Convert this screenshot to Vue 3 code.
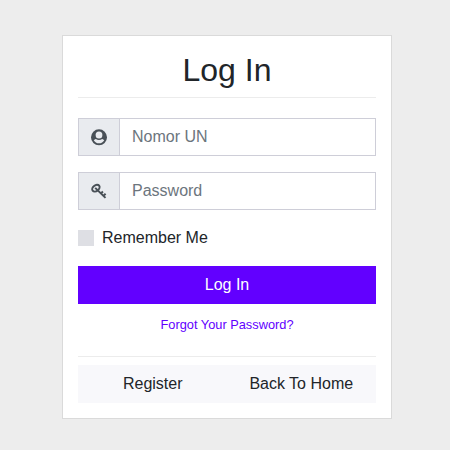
<script setup>
import { ref } from 'vue'

const username = ref('')
const password = ref('')
const remember = ref(false)
</script>

<template>
  <main class="page">
    <section class="card">
      <h2 class="title">Log In</h2>
      <form class="form" @submit.prevent>
        <div class="group">
          <span class="addon">
            <svg class="icon" viewBox="0 0 16 16">
              <circle cx="8" cy="8.3" r="8" />
              <ellipse class="cutout" cx="8" cy="6.1" rx="3.4" ry="3.5" />
              <path class="cutout" d="M2.8 11.2C3.3 10.6 4.1 10.2 4.9 10C5.7 10.7 6.8 11 8 11s2.3-.3 3.1-1c.8.2 1.6.6 2.1 1.2C12.1 13.2 10.4 14.3 8 14.3S3.9 13.2 2.8 11.2z" />
            </svg>
          </span>
          <input v-model="username" class="control" type="text" placeholder="Nomor UN" />
        </div>
        <div class="group">
          <span class="addon">
            <svg class="icon" viewBox="0 0 16 16">
              <ellipse class="stroke" cx="4.9" cy="5.2" rx="4.1" ry="2.9" transform="rotate(-38 4.9 5.2)" />
              <path class="stroke" d="M4.2 4.9L14.5 14.9M10 10.4L11.9 8.6M12.5 12.8L14.6 10.8" />
            </svg>
          </span>
          <input v-model="password" class="control" type="password" placeholder="Password" />
        </div>
        <label class="remember">
          <input v-model="remember" class="check" type="checkbox" />
          <span>Remember Me</span>
        </label>
        <button class="submit" type="submit">Log In</button>
      </form>
      <a class="forgot" href="#">Forgot Your Password?</a>
      <nav class="links">
        <a href="#">Register</a>
        <a href="#">Back To Home</a>
      </nav>
    </section>
  </main>
</template>

<style>
body {
  background: #ededed;
}
</style>

<style scoped>
* {
  box-sizing: border-box;
}
.page {
  padding: 35px 58px 31px 62px;
  font: 16px/24px "Liberation Sans", Arial, sans-serif;
  color: #212529;
}
.card {
  height: 384px;
  padding: 15px;
  background: #fff;
  border: 1px solid #dadada;
}
.title {
  height: 47px;
  margin: 0 0 20px;
  font-size: 32px;
  font-weight: 400;
  line-height: 38.4px;
  text-align: center;
  border-bottom: 1px solid #ececec;
}
.form {
  display: flex;
  flex-direction: column;
  gap: 16px;
}
.group {
  display: flex;
  height: 38px;
  border: 1px solid #ceced8;
}
.addon {
  display: flex;
  align-items: center;
  justify-content: center;
  width: 41px;
  background: #e9ebef;
  border-right: 1px solid #ceced8;
}
.icon {
  width: 16px;
  height: 16px;
  overflow: visible;
  fill: #495057;
}
.cutout {
  fill: #e9ebef;
}
.stroke {
  fill: none;
  stroke: #495057;
  stroke-width: 2;
}
.control {
  flex: 1;
  min-width: 0;
  padding: 0 12px;
  border: 0;
  outline: 0;
  background: #fff;
  color: #495057;
  font: inherit;
}
.control::placeholder {
  color: #6c757d;
  opacity: 1;
}
.remember {
  display: flex;
  align-items: center;
  gap: 8px;
  height: 24px;
}
.check {
  appearance: none;
  width: 16px;
  height: 16px;
  margin: 0;
  background: #dedfe4;
}
.submit {
  height: 38px;
  padding: 0;
  border: 0;
  background: #6200ff;
  color: #fff;
  font: inherit;
}
.forgot {
  display: block;
  height: 53px;
  padding-top: 9px;
  color: #6200ff;
  font-size: 12.8px;
  text-align: center;
  text-decoration: none;
  border-bottom: 1px solid #ececec;
}
.links {
  display: grid;
  grid-template-columns: 1fr 1fr;
  height: 38px;
  margin-top: 8px;
  background: #f8f8fb;
  line-height: 38px;
  text-align: center;
}
.links a {
  color: #212529;
  text-decoration: none;
}
.links a:first-child {
  padding-left: 0.5px;
}
.links a:last-child {
  padding-right: 0.5px;
}
</style>
